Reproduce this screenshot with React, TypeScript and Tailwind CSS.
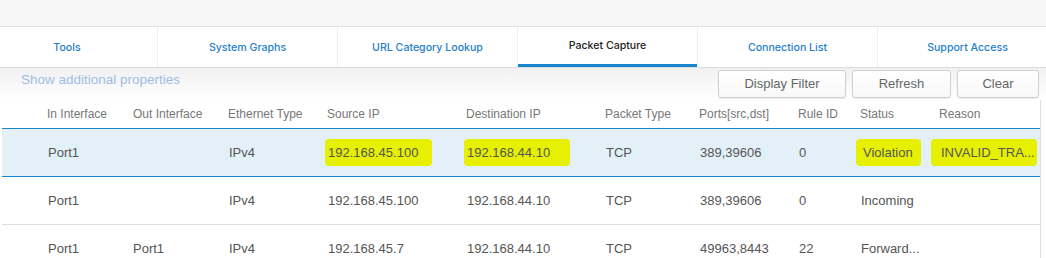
import type React from "react"

const tabs = ["Tools", "System Graphs", "URL Category Lookup", "Packet Capture", "Connection List", "Support Access"]

const headers = [
  "",
  "In Interface",
  "Out Interface",
  "Ethernet Type",
  "Source IP",
  "Destination IP",
  "Packet Type",
  "Ports[src,dst]",
  "Rule ID",
  "Status",
  "Reason",
]

interface Row {
  inIf: string
  outIf: string
  eth: string
  src: string
  dst: string
  type: string
  ports: string
  rule: string
  status: string
  reason: string
  selected?: boolean
}

const rows: Row[] = [
  {
    inIf: "Port1",
    outIf: "",
    eth: "IPv4",
    src: "192.168.45.100",
    dst: "192.168.44.10",
    type: "TCP",
    ports: "389,39606",
    rule: "0",
    status: "Violation",
    reason: "INVALID_TRA...",
    selected: true,
  },
  {
    inIf: "Port1",
    outIf: "",
    eth: "IPv4",
    src: "192.168.45.100",
    dst: "192.168.44.10",
    type: "TCP",
    ports: "389,39606",
    rule: "0",
    status: "Incoming",
    reason: "",
  },
  {
    inIf: "Port1",
    outIf: "Port1",
    eth: "IPv4",
    src: "192.168.45.7",
    dst: "192.168.44.10",
    type: "TCP",
    ports: "49963,8443",
    rule: "22",
    status: "Forward...",
    reason: "",
  },
]

const cols = "grid grid-cols-[45px_86px_95px_99px_139px_139px_94px_99px_62px_79px_101px]"

function Mark({ on, children, className = "" }: { on?: boolean; children: React.ReactNode; className?: string }) {
  if (!on) return <span>{children}</span>
  return (
    <span className={`-ml-[3px] inline-block rounded-[4px] bg-[#e6f000] px-[3px] py-[4px] ${className}`}>{children}</span>
  )
}

export default function App() {
  return (
    <div className="h-[258px] w-[1046px] overflow-hidden bg-white font-['Liberation_Sans',Arial,sans-serif]">
      <div className="h-[27px] border-b border-[#e0e0e0] bg-[#f7f7f7]" />
      <div className="flex h-[41px] -ml-[23px] border-b border-[#dcdcdc] bg-white font-['Inter',sans-serif] text-[10.6px] font-medium">
        {tabs.map((t, i) => (
          <div
            key={t}
            className={`relative flex w-[180px] shrink-0 items-center justify-center ${i > 0 ? "border-l border-[#f0f0f0]" : ""} ${
              t === "Packet Capture" ? "text-[#222]" : "text-[#1f80cc]"
            }`}
          >
            <span className={t === "Packet Capture" ? "-mt-[3px]" : "mt-[1px]"}>{t}</span>
            {t === "Packet Capture" && <div className="absolute bottom-0 left-0 right-0 h-[3px] bg-[#1a84cc]" />}
          </div>
        ))}
      </div>
      <div className="flex h-[32px] items-start justify-between bg-gradient-to-b from-[#f1f1f3] to-white pl-[21px] pr-[7px]">
        <span className="pt-[2px] text-[13.5px] text-[#9fbde2]">Show additional properties</span>
        <div className="mt-[2px] flex gap-[6px] text-[13px] text-[#666]">
          <button className="h-[28px] w-[128px] rounded-[3px] border border-[#cfcfcf] bg-gradient-to-b from-white to-[#f8f8f8] shadow-[0_1px_1px_rgba(0,0,0,0.08)]">
            Display Filter
          </button>
          <button className="h-[28px] w-[99px] rounded-[3px] border border-[#cfcfcf] bg-gradient-to-b from-white to-[#f8f8f8] shadow-[0_1px_1px_rgba(0,0,0,0.08)]">
            Refresh
          </button>
          <button className="h-[28px] w-[82px] rounded-[3px] border border-[#cfcfcf] bg-gradient-to-b from-white to-[#f8f8f8] shadow-[0_1px_1px_rgba(0,0,0,0.08)]">
            Clear
          </button>
        </div>
      </div>
      <div className="ml-[2px] w-[1039px] border-r border-[#dddddd]">
        <div className={`${cols} h-[28px] items-center text-[12px] text-[#777]`}>
          {headers.map((h, i) => (
            <div key={i} className="truncate">
              {h}
            </div>
          ))}
        </div>
        {rows.map((r, i) => (
          <div
            key={i}
            className={`${cols} items-center text-[13px] text-[#555] ${
              r.selected ? "h-[49px] border-y border-[#1a84cc] bg-[#e3f0f8]" : "h-[48px] border-b border-[#dddddd]"
            }`}
          >
            <div />
            <div className="pl-[1px]">{r.inIf}</div>
            <div>{r.outIf}</div>
            <div className="pl-[1px]">{r.eth}</div>
            <div className="pl-[1px]">
              <Mark on={r.selected} className="pr-[14px]">
                {r.src}
              </Mark>
            </div>
            <div className="pl-[1px]">
              <Mark on={r.selected} className="pr-[20px]">
                {r.dst}
              </Mark>
            </div>
            <div className="pl-[1px]">{r.type}</div>
            <div className="pl-[1px]">{r.ports}</div>
            <div className="pl-[1px]">{r.rule}</div>
            <div className="pl-[1px]">
              <Mark on={r.selected} className="-ml-[5px] pl-[7px] pr-[8px]">
                {r.status}
              </Mark>
            </div>
            <div className="pl-[1px]">
              <Mark on={r.selected} className="-ml-[9px] pl-[10px] pr-[2px]">
                {r.reason}
              </Mark>
            </div>
          </div>
        ))}
      </div>
    </div>
  )
}
